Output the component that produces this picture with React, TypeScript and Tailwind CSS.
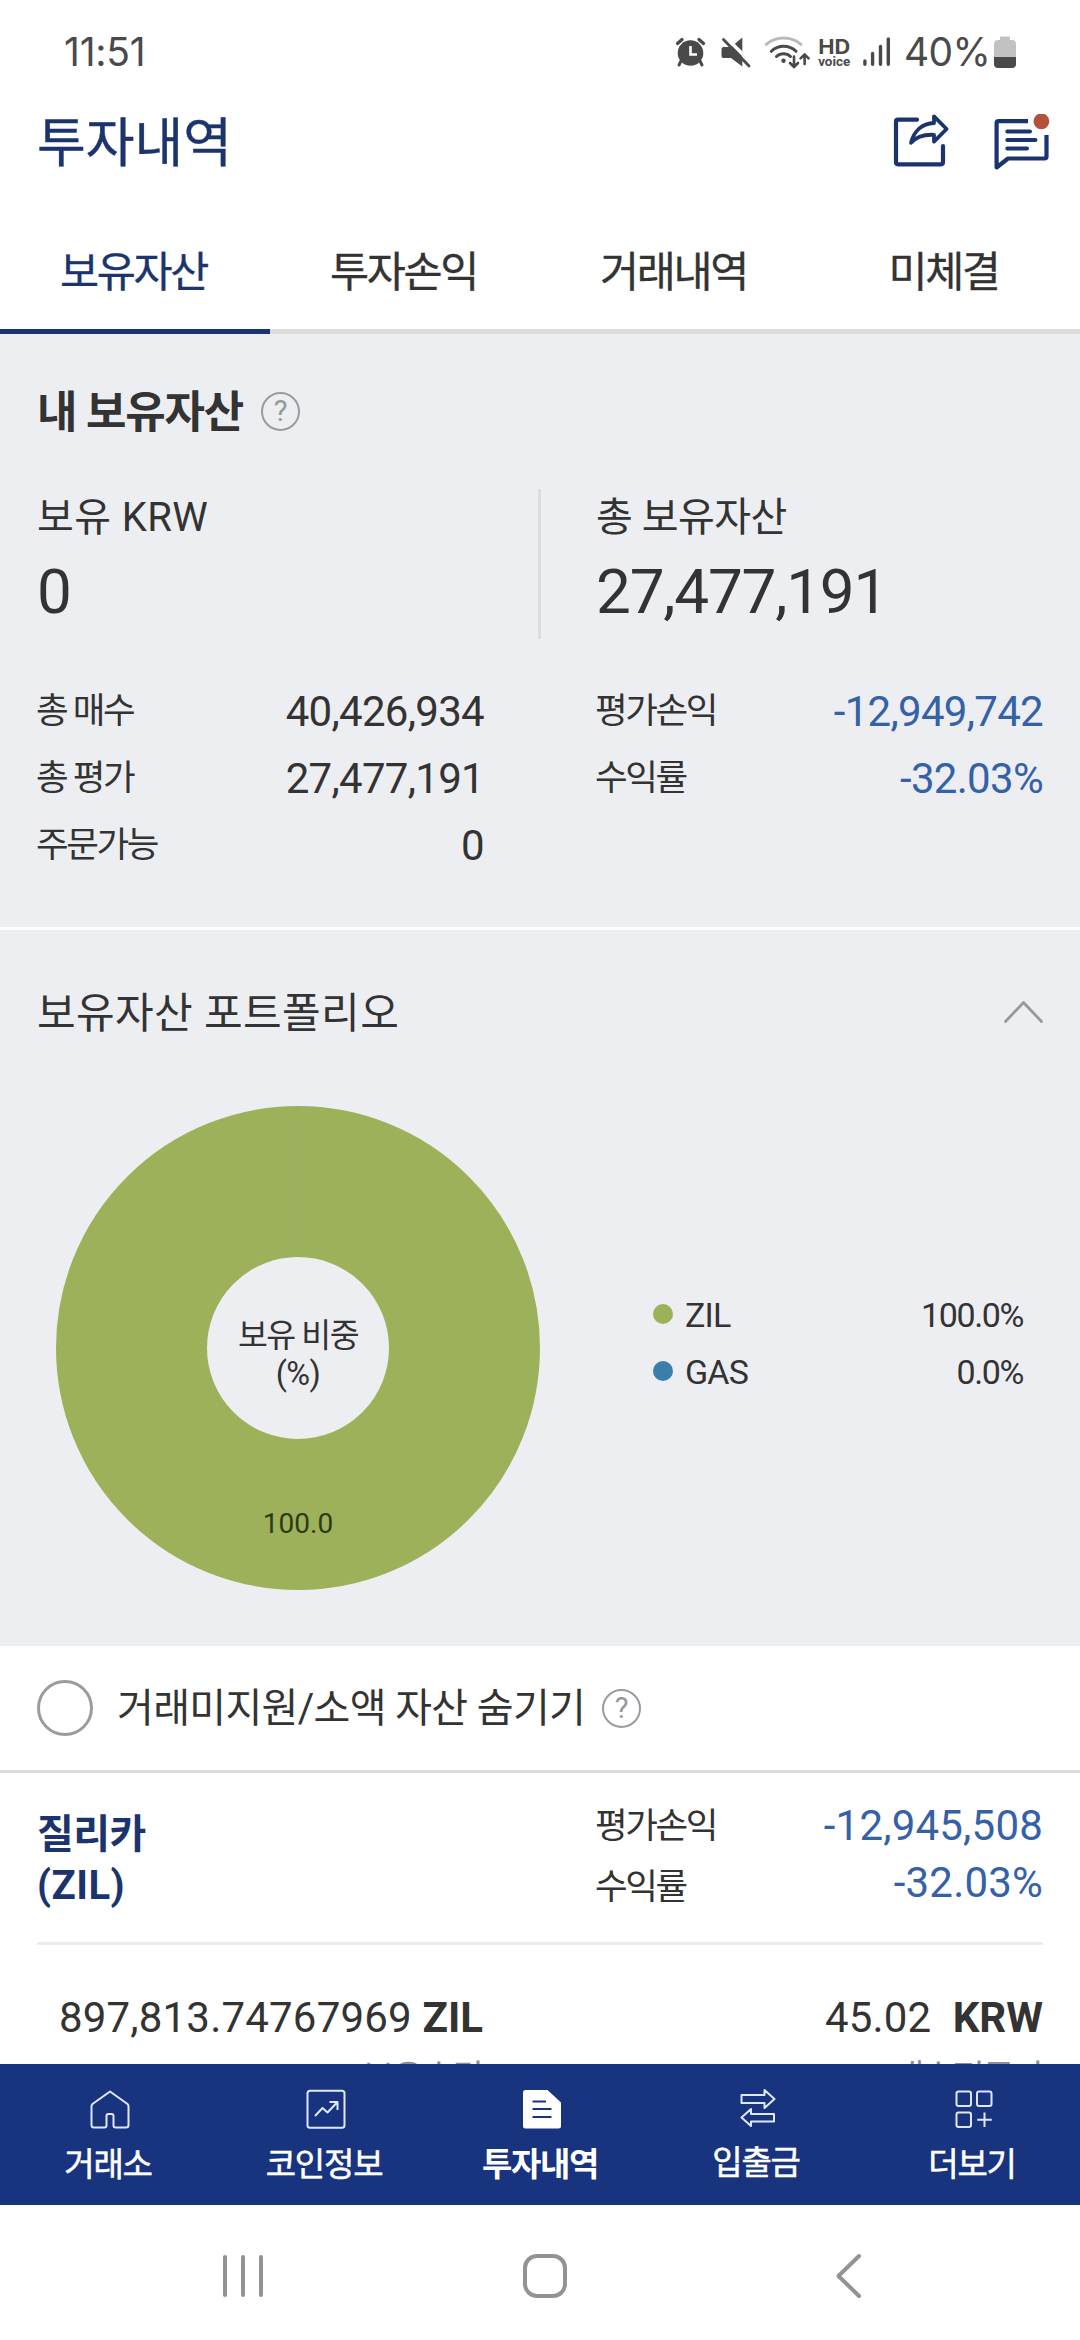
import type { ReactNode } from "react";

const FONT = "font-['Roboto','Noto_Sans_CJK_KR',sans-serif]";

function StatusBar() {
  return (
    <div className="flex h-[72px] items-center pt-[32px] pl-[64px] text-[#4a4a4a]">
      <span className="w-[612px] font-['Inter',sans-serif] text-[39px] leading-10 font-normal tracking-[-0.2px]">11:51</span>
      <svg width="215" height="36" viewBox="676 34 215 36" fill="none" className="shrink-0">
        {/* alarm */}
        <g stroke="#4a4a4a" strokeLinecap="round">
          <path d="M677.5 43.5 682 39.5M703.5 43.5 699 39.5" strokeWidth="3.2" />
          <path d="M681 61 679 65M700 61 702 65" strokeWidth="3" />
        </g>
        <circle cx="690.5" cy="53" r="12.8" fill="#4a4a4a" />
        <path d="M690.5 46V54.5H697" stroke="#fff" strokeWidth="2.6" />
        {/* muted speaker */}
        <path d="M723.5 47H731L742.3 37.5V66.5L731 58H723.5Q721.5 58 721.5 56V49Q721.5 47 723.5 47Z" fill="#4a4a4a" />
        <path d="M725 36.5 751 62.5" stroke="#fff" strokeWidth="3.6" />
        <path d="M723.5 39.5 749 66" stroke="#4a4a4a" strokeWidth="2.8" strokeLinecap="round" />
        {/* wifi */}
        <path d="M766.3 44.3A27 27 0 0 1 801 44.3" stroke="#b9b9b9" strokeWidth="3" strokeLinecap="round" />
        <g stroke="#4a4a4a" strokeWidth="3" strokeLinecap="round">
          <path d="M771.3 51.3A17.5 17.5 0 0 1 796 51.3" />
          <path d="M776.5 56.5A10 10 0 0 1 790.5 56.5" />
        </g>
        <circle cx="783.5" cy="60.8" r="2.2" fill="#4a4a4a" />
        <g stroke="#4a4a4a" strokeWidth="2.6" strokeLinecap="round" strokeLinejoin="round">
          <path d="M794 56.5V66.5M790 63 794 67 798 63" />
          <path d="M804.6 64V54.5M800.6 58.3 804.6 54.3 808.6 58.3" />
        </g>
        {/* signal */}
        <g stroke="#4a4a4a" strokeWidth="3.4" strokeLinecap="round">
          <path d="M864.9 61V64.3M872.6 53.5V64.3M880.5 46.5V64.3M888.3 39V64.3" />
        </g>
        <text x="834.2" y="53.6" textAnchor="middle" textLength="32" lengthAdjust="spacingAndGlyphs" fontFamily="Inter, sans-serif" fontWeight="700" fontSize="19.5" fill="#4a4a4a">HD</text>
        <text x="834.2" y="65.8" textAnchor="middle" textLength="32" lengthAdjust="spacingAndGlyphs" fontFamily="Roboto, sans-serif" fontWeight="700" fontSize="13.5" fill="#4a4a4a">voice</text>
      </svg>
      <span className="ml-[13px] w-[89px] font-['Inter',sans-serif] text-[39px] leading-10 font-normal tracking-[-0.6px]">40%</span>
      <svg width="22" height="32" viewBox="0 0 22 32" className="ml-[1px] shrink-0">
        <path d="M7 0.5H15Q16 0.5 16 1.5V4H18Q22 4 22 8V22H0V8Q0 4 4 4H6V1.5Q6 0.5 7 0.5Z" fill="#c2c2c2" />
        <path d="M0 21H22V28Q22 32 18 32H4Q0 32 0 28Z" fill="#4a4a4a" />
      </svg>
    </div>
  );
}

function Header() {
  return (
    <header className="flex h-[142px] items-center justify-between pr-[29px] pl-[37px]">
      <h1 className="pt-[2px] text-[53px] leading-[60px] text-[#1c346e] [-webkit-text-stroke:0.4px_#1c346e]">투자내역</h1>
      <div className="flex items-center gap-[42px]">
        <svg width="58" height="58" viewBox="893 114 58 58" fill="none" stroke="#1c346e" strokeWidth="4.2" strokeLinecap="round" strokeLinejoin="round">
          <path d="M917 119.7H898Q896 119.7 896 121.7V162.3Q896 164.3 898 164.3H941Q943 164.3 943 162.3V146" />
          <path d="M934 116.3 946.6 129 934 141.6V134.8C924 134.3 916 137 911 142.8C914 131 922 123.5 934 123Z" strokeWidth="3.8" />
        </svg>
        <svg width="58" height="58" viewBox="993 114 58 58" fill="none" stroke="#1c346e" strokeWidth="4.2" strokeLinecap="round" strokeLinejoin="round">
          <path d="M1028 121.2H998.6Q996.6 121.2 996.6 123.2V167.5L1008 158.5H1044.5Q1046.5 158.5 1046.5 156.5V135" strokeLinecap="butt" />
          <path d="M1007.3 131.4H1030M1007.3 140H1035.5M1007.3 148.5H1027" strokeWidth="4" />
          <circle cx="1041.4" cy="121.3" r="11" fill="#fff" stroke="none" />
          <circle cx="1041.4" cy="121.3" r="7.9" fill="#b5503a" stroke="none" />
        </svg>
      </div>
    </header>
  );
}

function Tabs() {
  const items = ["보유자산", "투자손익", "거래내역", "미체결"];
  return (
    <nav className="grid h-[120px] grid-cols-4 text-[42.5px] tracking-[-2.4px] [-webkit-text-stroke-width:0.3px]">
      {items.map((t, i) => (
        <div
          key={t}
          className={
            i === 0
              ? "flex items-center justify-center border-b-[5px] border-[#1c346e] pt-[3px] pr-[3px] text-[#1c346e]"
              : "flex items-center justify-center border-b-[5px] border-[#dcdcdd] pt-[3px] pr-[3px] text-[#333]"
          }
        >
          {t}
        </div>
      ))}
    </nav>
  );
}

function Help({ className }: { className: string }) {
  return (
    <span className={`flex size-[39px] shrink-0 items-center justify-center rounded-full border-2 border-[#9b9b9d] text-[29px] leading-none text-[#98989a] ${className}`}>
      ?
    </span>
  );
}

function Stat({ label, value, blue }: { label: string; value: string; blue?: boolean }) {
  return (
    <div className="flex h-[67px] items-center justify-between">
      <span className="text-[35.5px] tracking-[-2.4px]">{label}</span>
      <span className={blue ? "text-[42px] tracking-[-0.7px] text-[#3461a8]" : "text-[42px] tracking-[-0.7px]"}>{value}</span>
    </div>
  );
}

function Summary() {
  return (
    <section className="h-[593px] bg-[#edeef2]">
      <div className="flex h-[155px] items-center pt-[3px] pl-[37px]">
        <h2 className="text-[44px] font-bold tracking-[-1.2px]">내 보유자산</h2>
        <Help className="mb-[3px] ml-[18px]" />
      </div>
      <div className="flex h-[150px] pl-[37px]">
        <div className="w-[501px]">
          <div className="text-[40px] leading-[58px] tracking-[0.4px]">보유 KRW</div>
          <div className="text-[62px] leading-[90px]">0</div>
        </div>
        <div className="w-[3px] bg-[#dcdde1]" />
        <div className="pl-[55px]">
          <div className="text-[40px] leading-[58px] tracking-[-0.5px]">총 보유자산</div>
          <div className="text-[62px] leading-[90px] tracking-[-1.2px]">27,477,191</div>
        </div>
      </div>
      <div className="mt-[39px] flex gap-[111px] pl-[36px]">
        <div className="w-[448px]">
          <Stat label="총 매수" value="40,426,934" />
          <Stat label="총 평가" value="27,477,191" />
          <Stat label="주문가능" value="0" />
        </div>
        <div className="w-[448px]">
          <Stat label="평가손익" value="-12,949,742" blue />
          <Stat label="수익률" value="-32.03%" blue />
        </div>
      </div>
    </section>
  );
}

function LegendRow({ dot, name, value }: { dot: string; name: string; value: string }) {
  return (
    <div className="flex h-[57px] items-center text-[34px]">
      <span className={`mb-[3px] size-[20px] rounded-full ${dot}`} />
      <span className="ml-[12px] flex-1 tracking-[-0.8px]">{name}</span>
      <span className="tracking-[-1.4px]">{value}</span>
    </div>
  );
}

function Portfolio() {
  return (
    <section className="h-[719px] border-t-[3px] border-white bg-[#edeef2]">
      <div className="flex h-[166px] items-center justify-between pr-[36px] pl-[37px]">
        <h2 className="text-[42px] tracking-[0.4px]">보유자산 포트폴리오</h2>
        <svg width="41" height="24" viewBox="0 0 41 24" fill="none" stroke="#98999b" strokeWidth="2.8" strokeLinecap="round" strokeLinejoin="round" className="mb-[2px]">
          <path d="M2.5 21.5 20.5 2.5 38.5 21.5" />
        </svg>
      </div>
      <div className="mt-[10px] flex items-center pl-[56px]">
        <div className="relative size-[484px]">
          <svg width="484" height="484" viewBox="0 0 484 484" fill="none">
            <circle cx="242" cy="242" r="166.5" stroke="#9db15b" strokeWidth="151" />
            <path d="M242.5 0V151" stroke="#96ae68" strokeWidth="1.5" />
          </svg>
          <div className="absolute inset-x-0 top-[211px] text-center text-[32.5px] leading-[38px]">
            <div className="tracking-[-1.5px]">보유 비중</div>
            <div className="tracking-[-0.5px]">(%)</div>
          </div>
          <div className="absolute inset-x-0 top-[398px] text-center text-[28px] leading-10 text-[#2f3a14]">100.0</div>
        </div>
        <div className="mb-[8px] ml-[113px] w-[370px]">
          <LegendRow dot="bg-[#9db15b]" name="ZIL" value="100.0%" />
          <LegendRow dot="bg-[#3a7fab]" name="GAS" value="0.0%" />
        </div>
      </div>
    </section>
  );
}

function HideSmall() {
  return (
    <div className="flex h-[127px] items-center border-b-[3px] border-[#dcdcdc] pl-[37px]">
      <span className="size-[56px] rounded-full border-[3px] border-[#9b9b9b]" />
      <span className="ml-[24px] pt-[1px] text-[40px] tracking-[-0.65px]">거래미지원/소액 자산 숨기기</span>
      <Help className="ml-[17px]" />
    </div>
  );
}

function Coin() {
  return (
    <section>
      <div className="flex h-[169px] justify-between pr-[37px] pl-[37px]">
        <div className="w-[558px] pt-[36px] text-[40px] leading-[51px] font-bold text-[#1c346e]">
          <div className="tracking-[-0.5px]">질리카</div>
          <div className="tracking-[0.5px]">(ZIL)</div>
        </div>
        <div className="flex-1 pt-[23px] text-[35.5px] leading-[61px] tracking-[-2.4px]">
          <div>평가손익</div>
          <div>수익률</div>
        </div>
        <div className="pt-[24px] text-right text-[42px] leading-[57px] tracking-[0.2px] text-[#3461a8]">
          <div>-12,945,508</div>
          <div>-32.03%</div>
        </div>
      </div>
      <div className="mx-[37px] h-[3px] bg-[#ededed]" />
      <div className="flex justify-between pt-[42px] pr-[37px] pl-[37px] text-right">
        <div className="w-[446px]">
          <div className="text-[42px] leading-[62px] tracking-[0.2px]">
            897,813.74767969 <b className="tracking-normal">ZIL</b>
          </div>
          <div className="text-[35.5px] leading-[58px] tracking-[-2.4px] text-[#8b8d98]">보유수량</div>
        </div>
        <div>
          <div className="text-[42px] leading-[62px] tracking-[0.2px]">
            45.02&nbsp; <b className="tracking-normal">KRW</b>
          </div>
          <div className="text-[35.5px] leading-[58px] tracking-[-2.4px] text-[#8b8d98]">매수평균가</div>
        </div>
      </div>
    </section>
  );
}

function NavItem({ label, bold, raised, children }: { label: string; bold?: boolean; raised?: boolean; children: ReactNode }) {
  return (
    <div className={raised ? "flex flex-col items-center pt-[23px]" : "flex flex-col items-center pt-[25px]"}>
      <svg width="40" height="40" viewBox="0 0 40 40" fill="none" stroke="#dfe8ff" strokeWidth="2" strokeLinejoin="round" className="ml-[4px]">
        {children}
      </svg>
      <span
        className={
          bold
            ? "mt-[16px] text-[33px] leading-[40px] font-bold tracking-[-1.3px]"
            : "mt-[16px] text-[33px] leading-[40px] tracking-[-1.2px] [-webkit-text-stroke:0.5px_white]"
        }
      >
        {label}
      </span>
    </div>
  );
}

function BottomNav() {
  return (
    <nav className="grid h-[141px] grid-cols-5 bg-[#18347f] text-white">
      <NavItem label="거래소">
        <path d="M20 2.5 37.5 15Q38.5 16 38.5 17.5V36Q38.5 38.5 36 38.5H25.5Q23.5 38.5 23.5 36.5V27Q23.5 25 21.5 25H18.5Q16.5 25 16.5 27V36.5Q16.5 38.5 14.5 38.5H4Q1.5 38.5 1.5 36V17.5Q1.5 16 2.5 15Z" />
      </NavItem>
      <NavItem label="코인정보">
        <rect x="1.5" y="1.8" width="37" height="37" rx="2.5" />
        <path d="M9 27 16.5 19 21.5 23.5 31 13.5M23.5 13H31.5V21" />
      </NavItem>
      <NavItem label="투자내역" bold>
        <path d="M3.5 1H25.5L39 13.5V37Q39 39.5 36.5 39.5H3.5Q1 39.5 1 37V3.5Q1 1 3.5 1Z" fill="#fff" stroke="none" />
        <path d="M10.5 12.5H24M10.5 20H29.5M10.5 28H29.5" stroke="#18347f" strokeWidth="2.2" />
      </NavItem>
      <NavItem label="입출금" raised>
        <path d="M3.5 8H26.5V3L36.5 12 26.5 21V16H3.5Z" />
        <path d="M36 27H13V22L3.5 30.5 13 39V34.5H36Z" />
      </NavItem>
      <NavItem label="더보기">
        <rect x="2.5" y="2.5" width="14.5" height="14.5" rx="2" />
        <rect x="23" y="2.5" width="14.5" height="14.5" rx="2" />
        <rect x="2.5" y="23.5" width="14.5" height="14.5" rx="2" />
        <path d="M30.5 23.5V38M23.2 30.7H37.8" />
      </NavItem>
    </nav>
  );
}

function SystemNav() {
  return (
    <div className="flex h-[135px] items-center pt-[7px] pl-[223px]">
      <div className="flex gap-[13.5px]">
        <span className="h-[42px] w-[4.4px] rounded-full bg-[#939393]" />
        <span className="h-[42px] w-[4.4px] rounded-full bg-[#939393]" />
        <span className="h-[42px] w-[4.4px] rounded-full bg-[#939393]" />
      </div>
      <span className="ml-[260px] size-[44px] rounded-[14px] border-4 border-[#939393]" />
      <svg width="28" height="46" viewBox="0 0 28 46" fill="none" stroke="#939393" strokeWidth="4" strokeLinecap="round" strokeLinejoin="round" className="ml-[268px]">
        <path d="M24 3 3.5 23 24 43" />
      </svg>
    </div>
  );
}

export default function App() {
  return (
    <div className={`h-[2340px] w-[1080px] overflow-hidden bg-white text-[#333] ${FONT}`}>
      <div className="h-[2064px] overflow-hidden">
        <StatusBar />
        <Header />
        <Tabs />
        <Summary />
        <Portfolio />
        <HideSmall />
        <Coin />
      </div>
      <BottomNav />
      <SystemNav />
    </div>
  );
}
